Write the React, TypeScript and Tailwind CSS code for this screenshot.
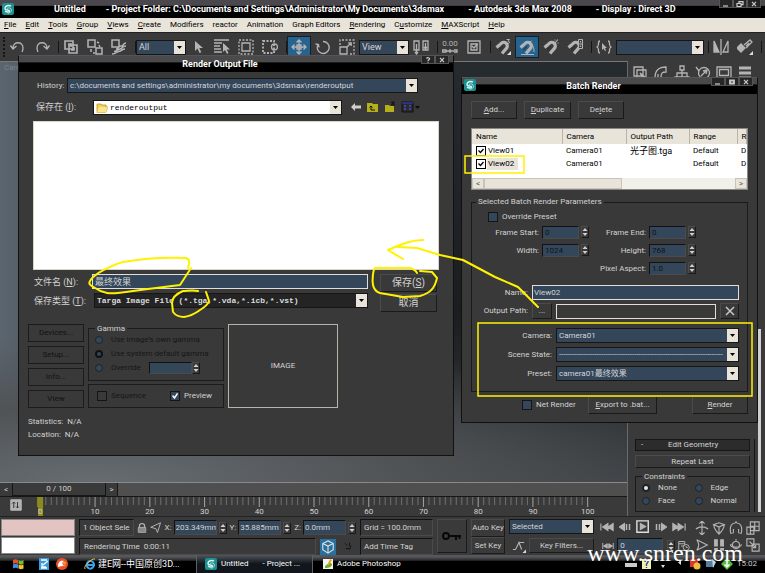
import React, { useState } from 'react';

const ui = "font-['Roboto','Noto_Sans_CJK_SC',sans-serif]";
const raised = 'border border-t-[#4b4b4b] border-l-[#4b4b4b] border-b-[#1a1a1a] border-r-[#1a1a1a]';
const sunken = 'border border-t-[#121212] border-l-[#121212] border-b-[#4b4b4b] border-r-[#4b4b4b]';

type IcoProps = { children: React.ReactNode; className?: string };

const Ico = ({ children, className = 'w-4 h-4' }: IcoProps) => (
  <svg className={`shrink-0 ${className}`} viewBox="0 0 16 16" fill="none" stroke="#b4b4b4" strokeWidth="1.3">
    {children}
  </svg>
);

const Logo = ({ className = 'w-3 h-3' }: { className?: string }) => (
  <svg className={`shrink-0 ${className}`} viewBox="0 0 12 12">
    <rect width="12" height="12" rx="2" fill="#1d8f8f" />
    <path d="M9 3.2C6.5 1.6 3 3 3 5.4c0 2.200 4.600 1 4.600 2.600C7.600 9.300 5 9.400 3 8.200" fill="none" stroke="#d8f5f2" strokeWidth="1.500" />
    <path d="M5 5.400c1.500-1.200 4.500-.4 4.500 1.800 0 1.800-1.800 3-3.800 3" fill="none" stroke="#9fe0da" strokeWidth="1" />
  </svg>
);

const Spinner = ({ className = 'h-3' }: { className?: string }) => (
  <span className={`w-2 shrink-0 flex items-center justify-center ${raised} ${className}`}>
    <svg className="w-1.5 h-2.5" viewBox="0 0 6 10" fill="#d0d0d0">
      <path d="M3 1l2.500 3h-5zM3 9l2.500-3h-5z" />
    </svg>
  </span>
);

type SelectProps = {
  label: string;
  value: string;
  className?: string;
  tone?: string;
  icon?: React.ReactNode;
};

const Select = ({ label, value, className = '', tone = 'bg-[#34475a] text-[#d4d4d4]', icon }: SelectProps) => (
  <span className={`relative flex h-[15px] min-w-0 border border-[#161616] ${tone} ${className}`}>
    {icon}
    <select aria-label={label} className="flex-1 min-w-0 appearance-none bg-transparent pl-0.5 pr-3 outline-none leading-[13px]">
      <option>{value}</option>
    </select>
    <span className="pointer-events-none absolute right-0 inset-y-0 w-[11px] bg-[#e8e4da] flex items-center justify-center">
      <svg className="w-[5px] h-[3px]" viewBox="0 0 5 3"><path d="M0 0h5L2.500 3z" fill="#000" /></svg>
    </span>
  </span>
);

type CheckProps = { label: string; checked?: boolean; disabled?: boolean };

const Check = ({ label, checked = false, disabled = false }: CheckProps) => {
  const [on, setOn] = useState(checked);
  return (
    <label className={`relative flex items-center gap-1 whitespace-nowrap ${disabled ? 'text-[#161616]' : ''}`}>
      <input
        type="checkbox"
        checked={on}
        disabled={disabled}
        onChange={() => setOn(!on)}
        className="peer appearance-none w-2.5 h-2.5 border border-[#151515] bg-[#34475a] disabled:bg-[#3a3a3a]"
      />
      <svg className="hidden peer-checked:block absolute left-0.5 w-1.5 h-2" viewBox="0 0 6 8"><path d="M.5 3.500l2 2.500L5.500 1.500" fill="none" stroke="#fff" strokeWidth="1.500" /></svg>
      {label}
    </label>
  );
};

type RadioProps = { name: string; label: string; checked?: boolean; disabled?: boolean };

const Radio = ({ name, label, checked, disabled }: RadioProps) => (
  <label className={`flex items-center gap-2 whitespace-nowrap ${disabled ? 'text-[#161616]' : ''}`}>
    <input
      type="radio"
      name={name}
      defaultChecked={checked}
      disabled={disabled}
      className="appearance-none w-2 h-2 shrink-0 rounded-full border border-[#1c232b] bg-[#34475a] checked:bg-[#e8e8e8] checked:border-2 disabled:checked:bg-[#34475a] disabled:checked:border-[#111]"
    />
    {label}
  </label>
);

const Button = ({ children, className = '' }: IcoProps) => (
  <button className={`flex items-center justify-center h-[18px] ${raised} ${className}`}>{children}</button>
);

const WinButtons = ({ marks }: { marks: string[] }) => (
  <div className="absolute right-1 top-0 flex">
    {marks.map((m) => (
      <button key={m} aria-label={m} className="w-3.5 h-2 flex items-center justify-center border border-t-0 border-[#555] bg-[#262626]">
        <svg className="w-2 h-1.5" viewBox="0 0 8 6" fill="none" stroke="#ccc" strokeWidth="1.200">
          {m === 'Minimize' && <path d="M1 5h5" />}
          {m === 'Restore' && <path d="M1 2.500h4v3h-4zM3 2V.6h4v3H5.500" />}
          {m === 'Maximize' && <path d="M2 1.500h4v3H2z" strokeWidth="1.800" />}
          {m === 'Help' && <path d="M2.500 1.500C3 .3 6 .5 5.500 2 5.300 2.800 4 2.600 4 4M4 4.800v1" />}
          {m === 'Close' && <path d="M2 .8l4 4.400M6 .8L2 5.200" />}
        </svg>
      </button>
    ))}
  </div>
);

const titleFont = 'font-bold text-[9px] text-white';

const TitleBar = () => (
  <header className={`relative h-[18px] shrink-0 flex items-center px-0.5 bg-linear-to-b from-[#4a484c] from-30% to-black to-35% whitespace-pre ${titleFont}`}>
    <Logo />
    <span className="ml-10">Untitled</span>
    <span className="ml-5">- Project Folder: C:\Documents and Settings\Administrator\My Documents\3dsmax</span>
    <span className="ml-6">- Autodesk 3ds Max 2008</span>
    <span className="ml-6">- Display : Direct 3D</span>
    <WinButtons marks={['Minimize', 'Restore', 'Close']} />
  </header>
);

const menus = [
  ['', 'F', 'ile'], ['', 'E', 'dit'], ['', 'T', 'ools'], ['', 'G', 'roup'], ['', 'V', 'iews'], ['', 'C', 'reate'],
  ['Modifiers', '', ''], ['reactor', '', ''], ['Animation', '', ''], ['Graph Editors', '', ''],
  ['', 'R', 'endering'], ['C', 'u', 'stomize'], ['', 'M', 'AXScript'], ['', 'H', 'elp'],
];

const MenuBar = () => (
  <nav className="h-[14px] shrink-0 flex items-center gap-[9px] pl-1 bg-[#e8e4da] text-black">
    {menus.map(([a, u, b]) => (
      <a key={a + u + b} href="#menu">{a}<u>{u}</u>{b}</a>
    ))}
  </nav>
);

const Sep = () => <span className="w-[5px] h-3 shrink-0 border-r border-[#161616]" />;

const Tool = ({ name, on, children }: { name: string; on?: boolean; children: React.ReactNode }) => (
  <button aria-label={name} className={`w-6 h-[22px] shrink-0 flex items-center justify-center ${on ? 'bg-[#27638f] border border-[#12202c]' : ''}`}>
    <Ico>{children}</Ico>
  </button>
);

const magnet = (
  <>
    <path d="M1.500 8.500L6 4.600a3.600 3.600 0 0 1 5.400 4.800L7 14.500" strokeWidth="3.200" />
    <path d="M4.200 11.200L8 7.400" stroke="#2a2a2a" strokeWidth="1" />
  </>
);

const Toolbar = () => (
  <div className="h-[29px] shrink-0 flex items-center pl-[3px] bg-[#3a3a3a] border-t border-[#222] text-[9px]">
    <span className="w-[3px] h-5 border-l-2 border-dotted border-[#151515]" />
    <Tool name="Undo"><path d="M3 9c0-7 10-7 10 0 0 2-.5 3-1 4M.5 6.500L3 10l3.500-3" /></Tool>
    <Tool name="Redo"><path d="M13 9c0-7-10-7-10 0 0 2 .5 3 1 4M15.500 6.500L13 10l-3.500-3" /></Tool>
    <Sep />
    <Tool name="Link"><path d="M2 2h8v8H2zM6 6h8v8H6zM5 5h3v3M11 8v3H8" strokeWidth="1.600" /></Tool>
    <Tool name="Unlink"><path d="M1 1h7v7H1zM9 9h6v6H9zM10 3l2 1M12 6l1 2M4 10v3M6 14l2 0" strokeWidth="1.500" /></Tool>
    <Tool name="Bind to space warp"><path d="M1 1h7v7H1zM5 10c3 0 2-3 5-3s2-3 5-3M3 12.500c3 0 3-2 6-2.500s2-3 6-3M1 15c4 0 4-2 7-2.500s3-2.500 6-2.500" strokeWidth="1.500" /></Tool>
    <Sep />
    <Select label="Selection filter" value="All" className="w-[50px]" />
    <Tool name="Select"><path d="M5 2v10l2.500-2.500L9.500 14l1.800-.8-2-4.200H13z" fill="#b4b4b4" stroke="none" /></Tool>
    <Tool name="Select by name"><path d="M0 1h15M0 4h8M0 7h6M0 10h7M0 13h8" /><path d="M9 4v9l2-2 2 4 1.500-1-1.800-3.500H16z" fill="#b4b4b4" stroke="none" /></Tool>
    <Tool name="Rectangular region"><path d="M4 4h8v8H4z" /><path d="M1 1h14v14H1z" strokeDasharray="2 1.500" /></Tool>
    <Tool name="Window crossing"><path d="M1 2h11v12H1z" strokeDasharray="2 1.500" strokeWidth="1.800" /><circle cx="12.500" cy="8" r="3" /></Tool>
    <Sep />
    <Tool name="Move" on><path d="M8 1v14M1 8h14M5.500 3.500L8 1l2.500 2.500M5.500 12.500L8 15l2.500-2.500M3.500 5.500L1 8l2.500 2.500M12.500 5.500L15 8l-2.500 2.500M6 6h4v4H6z" /></Tool>
    <Tool name="Rotate"><path d="M3 5.500a6 6 0 1 0 5-3M.5 5l3 .5.5 3" /></Tool>
    <Tool name="Scale"><path d="M1 8h7v7H1z" /><path d="M1 6V1h14v14h-5" strokeDasharray="2 1.500" /><path d="M8 8l4-4M9 3.800h3.200V7" /></Tool>
    <Select label="Coordinate system" value="View" className="w-[50px]" />
    <Tool name="Pivot center"><path d="M1 2h5v9H1zM10 2h5v9h-5zM3.500 5v10M2 13l1.500 2L5 13M12.500 4v6M11 8l1.500 2L14 8" /></Tool>
    <Sep />
    <button aria-label="Manipulate" className="w-6 flex flex-col items-center text-[8px] leading-[8px] text-[#b4b4b4]">
      0.00
      <svg className="w-4 h-1.5" viewBox="0 0 16 6" fill="none" stroke="#b4b4b4" strokeWidth="1.300"><path d="M0 2h4v2H0zM4 3h8M12 2h3v2h-3M8 1v4" /></svg>
    </button>
    <Tool name="Keyboard override"><path d="M2 2h12v12H2zM5 5h6v6H5zM6 7l2 2 4-4.500" /></Tool>
    <Sep />
    <Tool name="Snaps">{magnet}<path d="M11.500.5h3l-1.500 1.800c2.500 0 2 2.700-1 2" strokeWidth="1" /><path d="M16 12v4h-4z" fill="#ddd" stroke="none" /></Tool>
    <Tool name="Angle snap" on>{magnet}<path d="M2 15.500h13M10.500 3.500c3 1 4.500 5 4.500 9.500M12.500 2L10 3.500l2 2.500" strokeWidth="1" /></Tool>
    <Tool name="Percent snap">{magnet}<path d="M11.500 4.500l3.500-4M11.500 1h1M14.500 4h1" strokeWidth="1.100" /></Tool>
    <Tool name="Spinner snap">{magnet}<path d="M11.500.5h4v9h-4zM11.500 5h4" strokeWidth="1" fill="#3a3a3a" /><path d="M13.500 2v1.500M13.500 6.500V8" /></Tool>
    <Sep />
    <Tool name="Named selections"><path d="M4 2C1 2 4 7 1 8c3 1 0 6 3 6M12 2c3 0 0 5 3 6-3 1 0 6-3 6" /><path d="M6 4v7l1.500-1.500L9 12l1-.6L9 9h2z" fill="#b4b4b4" stroke="none" /></Tool>
    <Select label="Named selection sets" value="" className="w-[88px]" />
    <Sep />
    <Tool name="Mirror"><path d="M1 2v11h5zM8 0v16" fill="#b4b4b4" /><path d="M15 2v11h-5z" /></Tool>
    <Tool name="Align"><path d="M0 9l4-4 4 4-4 4z" fill="#b4b4b4" /><path d="M7 6l6-5 2 2-6 6M9 7l3-3" /><path d="M16 12v4h-4z" fill="#ddd" stroke="none" /></Tool>
    <Sep />
  </div>
);

const TimeTrack = () => (
  <div className="shrink-0 bg-[#3a3a3a]">
    <div className="h-[14px] flex items-stretch border-t border-[#8a8a8a] bg-[#4f4f4f]">
      <button className="w-3 flex items-center justify-center bg-[#3a3a3a]">&lt;</button>
      <span className="w-[94px] flex items-center justify-center bg-[#3a3a3a] border-x border-[#161616] border-b">0 / 100</span>
      <button className="w-3 flex items-center justify-center bg-[#3a3a3a] border-r border-[#161616]">&gt;</button>
    </div>
    <div className="h-5 flex border-t border-[#161616]">
      <span className="w-[13px] shrink-0 relative">
        <Ico className="absolute left-2.5 top-0.5 w-3 h-3"><path d="M1 1h14v14H1z" fill="#b4b4b4" /><path d="M5 12V4M3 6l2-2 2 2M10 4v8M8 10l2 2 2-2" stroke="#333" /></Ico>
      </span>
      <div className="relative flex-1 mr-3">
        <svg className="absolute inset-x-0 top-0 w-full h-2.5" viewBox="0 0 1100 10" preserveAspectRatio="none">
          {Array.from({ length: 101 }, (_, i) => (
            <rect key={i} x={49 + i * 10} y="0" width="2" height={i % 10 === 0 ? 10 : 8} fill={i % 10 === 0 ? '#9a9a9a' : '#6c6c6c'} />
          ))}
          <rect x="44" y="0" width="11" height="10" fill="#8d8a1c" />
        </svg>
        <div className="relative flex pt-2.5 leading-[9px]">
          {[0, 10, 20, 30, 40, 50, 60, 70, 80, 90, 100].map((n) => (
            <span key={n} className="flex-1 text-center"><span className={n === 0 ? 'bg-[#8d8a1c]' : ''}>{n}</span></span>
          ))}
        </div>
      </div>
    </div>
  </div>
);

const CommandPanel = () => (
  <aside className="w-[138px] shrink-0 flex flex-col bg-[#3a3a3a] border-l border-[#6a6a6a]">
    <div className="flex gap-[5px] pl-1 pt-1 h-5">
      <Ico><path d="M2 2h9v9H2zM5 5h9v9H5z" /><path d="M8 8l5 4-2 1z" fill="#b4b4b4" /></Ico>
      <Ico><path d="M2 13C2 5 6 2 13 2v5C9 7 8 8 8 13zM5 13V9" /></Ico>
      <Ico><path d="M6 1h4v4H6zM8 5v8M3 12V8h10v4M1 12h4v3H1zM6 12h4v3H6zM11 12h4v3h-4z" /></Ico>
      <Ico><circle cx="9" cy="8" r="5.500" /><path d="M1 2l3 4M6 11l6-6M8 6l4-1-1 4" /></Ico>
      <Ico><path d="M1 2h14v11H1zM3.500 4.500h9v6h-9z" /></Ico>
      <Ico><path d="M2 3h12M2 8h12M2 13h12" strokeWidth="3" /></Ico>
    </div>
    <div className="mt-auto flex gap-[2px] pl-[5px] pr-[3px] pb-1">
      <div className="flex-1 pl-0.5 pr-1 border-r border-[#161616]">
        <div className="h-3 mb-1 flex items-center bg-[#2c2c2c] border border-[#161616]">
          <span className="w-3 text-center">-</span>
          <span className="flex-1 pr-3 pl-5">Edit Geometry</span>
        </div>
        <button className={`w-full h-[13px] mb-1 flex items-center justify-center ${raised}`}>Repeat Last</button>
        <fieldset className="border border-[#1a1a1a] px-1.5 pb-1">
          <legend className="leading-[9px] px-0.5">Constraints</legend>
          <div className="grid grid-cols-2 gap-x-1 leading-[13px]">
            <Radio name="cons" label="None" checked />
            <Radio name="cons" label="Edge" />
            <Radio name="cons" label="Face" />
            <Radio name="cons" label="Normal" />
          </div>
        </fieldset>
      </div>
      <span className="w-[3px] mx-px -mt-[110px] bg-[#cfcfcf]" />
    </div>
  </aside>
);

const Coord = ({ axis, value }: { axis: string; value: string }) => (
  <label className="flex items-center gap-0.5">
    {axis}:
    <input defaultValue={value} className={`w-[43px] h-[15px] pl-px bg-[#34475a] ${sunken}`} />
    <Spinner />
  </label>
);

const StatusBar = () => (
  <div className="h-[39px] shrink-0 flex gap-1 pt-0.5 pl-px pr-1 bg-[#3a3a3a] border-t border-[#222] whitespace-nowrap">
    <div className="w-[74px] flex flex-col gap-px">
      <span className="h-[17px] bg-[#e3c4c2] border border-[#888]" />
      <span className="h-[17px] bg-white border border-[#888]" />
    </div>
    <div className="w-[277px] flex flex-col gap-0.5">
      <div className="h-[17px] flex items-center justify-between">
        <span className={`h-[17px] leading-[16px] px-[3px] ${sunken}`}>1 Object Sele</span>
        <Ico className="w-2.5 h-2.5"><path d="M2 7h12v8H2z" fill="#888" /><path d="M4 7V4c0-4 8-4 8 0v3" strokeWidth="2" /></Ico>
        <Ico className="w-3 h-3"><path d="M14 1L1 7l7 2 2 5z" /></Ico>
        <Coord axis="X" value="203.349mm" />
        <Coord axis="Y" value="35.885mm" />
        <Coord axis="Z" value="0.0mm" />
      </div>
      <div className="h-[17px] flex items-center gap-1">
        <span className={`flex-1 h-[17px] leading-[16px] pl-1 ${sunken}`}>Rendering Time&nbsp; 0:00:11</span>
        <button aria-label="Adaptive" className="w-4 h-4 flex items-center justify-center bg-[#27709f]"><Ico className="w-3.5 h-3.5"><path d="M8 1l6 3v7l-6 4-6-4V4zM2 4l6 3 6-3M8 7v8" stroke="#ddd" /></Ico></button>
        <Ico className="w-4 h-3"><path d="M4 3l3 3M10 2v5M5 10h5M12 6l-2 6" stroke="#151515" /></Ico>
      </div>
    </div>
    <div className="w-[73px] flex flex-col gap-0.5">
      <span className={`h-[17px] leading-[16px] pl-[3px] ${sunken}`}>Grid = 100.0mm</span>
      <button className={`h-[17px] leading-[15px] pl-[3px] text-left ${sunken}`}>Add Time Tag</button>
    </div>
    <button aria-label="Set keys" className={`w-[30px] h-[34px] flex items-center justify-center ${raised}`}>
      <svg className="w-5 h-2.5" viewBox="0 0 20 10" fill="none" stroke="#080808" strokeWidth="2"><circle cx="4" cy="5" r="3" /><path d="M7 5h12M14 5v4M17.500 5v3" /></svg>
    </button>
    <div className="w-[34px] flex flex-col">
      <button className={`h-[18px] ${raised}`}>Auto Key</button>
      <button className={`h-[17px] ${raised}`}>Set Key</button>
    </div>
    <div className="w-[85px] flex flex-col gap-1">
      <Select label="Key mode" value="Selected" />
      <div className="flex items-center">
        <Ico className="w-5 h-3.5"><path d="M1 12h3l4-8 3 8M8 4h6" /><path d="M16 12v4h-4z" fill="#ddd" stroke="none" /></Ico>
        <button className={`flex-1 h-[15px] flex items-center justify-center ${raised}`}>Key Filters...</button>
      </div>
    </div>
    <div className="w-[92px] flex flex-col gap-1">
      <div className="h-[15px] flex items-center justify-between pl-0.5 pr-1">
        <Ico className="w-3.5 h-3.5"><path d="M1 4v8M9 4v8L3 8zM15 4v8L9 8z" fill="#b4b4b4" /></Ico>
        <Ico className="w-3 h-3"><path d="M7 4v8L1 8zM10 4v8M14 4v8" fill="#b4b4b4" strokeWidth="2" /></Ico>
        <Ico className="w-3.5 h-3.5"><path d="M1 1h13v13H1z" stroke="#e0e0e0" strokeWidth="1.600" /><path d="M5 4v7l6-3.500z" fill="#b4b4b4" /></Ico>
        <Ico className="w-3 h-3"><path d="M9 4v8l6-4zM6 4v8M2 4v8" fill="#b4b4b4" strokeWidth="2" /></Ico>
        <Ico className="w-3.5 h-3.5"><path d="M15 4v8M7 4v8l6-4zM1 4v8l6-4z" fill="#b4b4b4" /></Ico>
      </div>
      <div className="h-[15px] flex items-center justify-between pl-1">
        <Ico className="w-3 h-3"><path d="M1 4v8M15 4v8M7 5v6L2 8zM9 5v6l5-3z" fill="#b4b4b4" /></Ico>
        <input aria-label="Current frame" defaultValue="0" className={`w-[46px] h-[15px] pl-0.5 bg-[#34475a] ${sunken}`} />
        <Spinner />
        <Ico className="w-3 h-3"><path d="M1 2h8v12H1zM1 5h8M4 8h4" /><circle cx="11" cy="10" r="4" fill="#3a3a3a" /><path d="M11 8v2h2" /></Ico>
      </div>
    </div>
    <div className="flex-1 grid grid-cols-4 justify-items-center items-center pb-0.5">
      <Ico className="w-3.5 h-3.5"><path d="M8 0v16M5 3l3-3 3 3M5 13l3 3 3-3M1 9l4-2h6l4 2" /></Ico>
      <Ico className="w-3.5 h-3.5"><path d="M2 4l6-2 6 2-6 3zM2 4c0 5 3 8 6 11 3-3 6-6 6-11M8 7v8" /></Ico>
      <Ico className="w-3.5 h-3.5"><path d="M4 14H2c-2-9 2-12 6-12s8 3 6 12h-2M8 2V0M5 9v5M11 9v5" /></Ico>
      <Ico className="w-3.5 h-3.5"><path d="M5 1h10v10H5zM1 7h8v8H1zM10 1v10M5 6h10M5 7v8" /></Ico>
      <Ico className="w-3.5 h-3.5"><path d="M2 2l12 6-12 6M2 2c3 4 3 8 0 12" /></Ico>
      <Ico className="w-3.5 h-3.5"><path d="M3 2h3v7H3zM10 2h3v7h-3zM3 12h3v2H3zM10 12h3v2h-3z" fill="#b4b4b4" /></Ico>
      <Ico className="w-3.5 h-3.5"><circle cx="8" cy="8" r="4" /><path d="M3 7c-6 3 12 6 11 0M8 1v2M8 13v2" /></Ico>
      <Ico className="w-3.5 h-3.5"><path d="M1 1h8v8H1zM7 7h8v8H7zM4 4l7 7M11 8v3H8" /></Ico>
    </div>
  </div>
);

const Taskbar = () => (
  <footer className="h-[18px] shrink-0 flex items-center bg-linear-to-b from-[#55575a] from-10% via-[#2a2a2c] via-30% to-black to-36% text-white">
    <button aria-label="Start" className="w-9 flex justify-center">
      <svg className="w-3 h-3" viewBox="0 0 12 12"><path d="M1 2c2-1 3-1 5 0v4C4 5 3 5 1 6z" fill="#e2532b" /><path d="M6.500 2c2 1 3 1 5 0v4c-2 1-3 1-5 0z" fill="#7db93a" /><path d="M1 6.500c2-1 3-1 5 0v4c-2-1-3-1-5 0z" fill="#3d8fe0" /><path d="M6.500 6.500c2 1 3 1 5 0v4c-2 1-3 1-5 0z" fill="#f5c531" /></svg>
    </button>
    <svg className="w-3.5 h-3 mx-px" viewBox="0 0 14 12"><path d="M2 0h10v12H2z" fill="#3a9be0" /><path d="M4 2h6M4 10h6M6 7l5-4M5 5v4h4" stroke="#fff" strokeWidth="1.300" fill="none" /></svg>
    <svg className="w-3 h-3 ml-1" viewBox="0 0 12 12"><circle cx="6" cy="6" r="6" fill="#e9502a" /><path d="M2 9c0-6 3-7 6-6-2 1-2 3-1 4l3 0" fill="#fff" /><circle cx="8.500" cy="5" r="1.500" fill="#f7a21b" /></svg>
    <button className="w-[112px] ml-4 flex items-center gap-0.5 whitespace-nowrap text-[9px]">
      <svg className="w-3 h-3 shrink-0" viewBox="0 0 12 12" fill="none"><path d="M10 8c-3 5-8 2-7-2s7-4 7 1H3.500" stroke="#3fa1ea" strokeWidth="2" /><path d="M1 11C-1 8 8 0 11 1" stroke="#f3c32f" /></svg>
      建E网--中国原创3D...
    </button>
    <button className="w-[117px] h-[18px] flex items-center gap-1 pl-2 border-x border-[#5a6068] bg-linear-to-b from-[#50565c] to-[#10161c] to-50% whitespace-pre">
      <Logo />Untitled<span className="ml-2.5">- Project ...</span>
    </button>
    <button className="flex items-center gap-1 pl-2.5 whitespace-nowrap">
      <svg className="w-2.5 h-2.5" viewBox="0 0 10 10"><path d="M0 0h10v10H0z" fill="#f4f4f4" /><path d="M2 9c0-4 3-3 4-6l3 2C9 8 6 9 2 9z" fill="#6aa52c" /><path d="M7 0l2 1-3 5-2 1z" fill="#e9a61c" /></svg>
      Adobe Photoshop
    </button>
    <div className="ml-auto flex items-center gap-1 pr-2">
      <svg className="w-3 h-2" viewBox="0 0 12 8"><path d="M0 3h12v4H0z" fill="#ccc" /></svg>
      <svg className="w-3 h-3" viewBox="0 0 12 12"><path d="M1 1h9v10H1z" fill="#f4efb0" /><path d="M4 4c0-3 4-2 3 0L5.500 6v2M5.500 9v1" stroke="#224a9a" strokeWidth="1.400" fill="none" /></svg>
      <svg className="w-3 h-2.5" viewBox="0 0 12 10"><path d="M4 6h4L6 9z" fill="#ddd" /></svg>
      <svg className="w-3 h-2.5" viewBox="0 0 12 10"><path d="M8 1v5L5 3.500z" fill="#ddd" /></svg>
      <svg className="w-3 h-3" viewBox="0 0 12 12"><path d="M1 1h8v8H1z" fill="#d8382c" /><circle cx="8" cy="8" r="3.500" fill="#f0bd3a" /></svg>
      <svg className="w-3 h-3" viewBox="0 0 12 12"><path d="M1 2h8v7H1z" fill="#5580a0" /><path d="M7 1l4 3-3 6" fill="#c8d4dc" /></svg>
      <svg className="w-3 h-3" viewBox="0 0 12 12"><path d="M6 0l6 6-6 6-6-6z" fill="#4fbf35" /><path d="M6 3v6M3.500 6.500L6 9l2.500-2.500" stroke="#fff" strokeWidth="1.500" fill="none" /></svg>
      <span className="text-[#cfcfcf]">15:02</span>
    </div>
  </footer>
);

const DialogTitle = ({ children, marks, logo }: { children: string; marks: string[]; logo?: boolean }) => (
  <div className={`relative h-4 pr-8 flex items-center justify-center bg-linear-to-b from-[#4a4a4c] from-38% to-black to-44% ${titleFont}`}>
    {logo && <Logo className="w-3 h-3 absolute left-0.5 top-px" />}
    {children}
    <WinButtons marks={marks} />
  </div>
);

const OutputDialog = () => (
  <section className="absolute left-[18px] top-[55px] w-[436px] bg-[#393939] border border-t-[#555] border-[#111] pb-3.5">
    <DialogTitle marks={['Help', 'Close']}>Render Output File</DialogTitle>
    <div className="flex items-center pl-[18px] mt-1.5 h-[15px]">
      <span className="w-[30px]">History:</span>
      <Select label="History" value="c:\documents and settings\administrator\my documents\3dsmax\renderoutput" className="w-[351px]" />
    </div>
    <div className="flex items-center pl-[17px] mt-1.5 h-4 text-[9px]">
      <span className="w-[57px]">保存在 (<u>I</u>):</span>
      <Select
        label="保存在"
        value="renderoutput"
        className="w-[249px] font-['Liberation_Mono',monospace] text-[8px]"
        tone="bg-white text-black"
        icon={<svg className="w-3 h-3 ml-0.5 mt-px shrink-0" viewBox="0 0 12 12"><path d="M1 3V2h4l1 1h4v2h2L9.500 10.500H1z" fill="#f3cf4e" stroke="#b5871c" strokeWidth=".7" /><path d="M3 5h9L9.500 10.500H1z" fill="#fbe68c" /></svg>}
      />
      <div className="flex items-center gap-[5px] ml-2">
        <svg className="w-3 h-3" viewBox="0 0 12 12"><path d="M1 6l4-4v2.500h6v3H5V10z" fill="#d2cfc8" /></svg>
        <svg className="w-3 h-3" viewBox="0 0 12 12"><path d="M0 2h5l1 1h5v8H0z" fill="#b5b017" /><path d="M4 9V5M2.500 6.500L4 5l1.500 1.500M4 9h4" stroke="#111" fill="none" /></svg>
        <svg className="w-3 h-3" viewBox="0 0 12 12"><path d="M1 4h4l1 1h4v6H1z" fill="#b5b017" /><path d="M9 0v5M7 1l4 3M11 1L7 4" stroke="#111" /></svg>
        <svg className="w-5 h-3" viewBox="0 0 20 12"><path d="M1 1h11v10H1z" fill="#2b2b2b" stroke="#111" /><path d="M1 2h11" stroke="#3333a8" strokeWidth="1.500" /><path d="M3 5h2M8 5h2M3 8h2M8 8h2" stroke="#4a4ad8" strokeWidth="1.500" /><path d="M14 5h5l-2.500 3z" fill="#0a0a0a" /></svg>
      </div>
    </div>
    <div className="mx-3.5 mt-1.5 h-[149px] bg-white border border-[#d8d4c8]" />
    <div className="flex mt-1 pl-[15px] pr-4 text-[9px]">
      <div className="w-[334px] flex flex-col gap-1">
        <label className="flex items-center h-[15px]">
          <span className="w-[58px]">文件名 (<u>N</u>):</span>
          <input defaultValue="最终效果" className="flex-1 h-[15px] pl-0.5 bg-[#34475a] border border-[#e4dcd8] outline-none" />
        </label>
        <div className="flex items-center">
          <span className="w-[60px]">保存类型 (<u>T</u>):</span>
          <Select label="保存类型" value="Targa Image File (*.tga,*.vda,*.icb,*.vst)" className="flex-1 font-['Liberation_Mono',monospace] font-bold text-[8px]" tone="bg-[#242424] text-[#dcdcdc]" />
        </div>
      </div>
      <div className="flex-1 ml-3 flex flex-col gap-0.5 text-[10px]">
        <Button>保存(<u>S</u>)</Button>
        <Button>取消</Button>
      </div>
    </div>
    <div className="flex gap-1 mt-3 pl-[9px]">
      <div className="w-[56px] flex flex-col gap-1 text-[#121212]">
        {['Devices...', 'Setup...', 'Info...', 'View'].map((b) => (
          <button key={b} disabled className="h-[18px] border border-[#1c1c1c]">{b}</button>
        ))}
      </div>
      <div className="w-[136px] flex flex-col justify-between">
        <fieldset className="h-[57px] px-1.5 border border-[#1c1c1c]">
          <legend className="leading-[9px] px-0.5">Gamma</legend>
          <div className="flex flex-col leading-[14px]">
            <Radio name="gamma" label="Use image's own gamma" disabled />
            <Radio name="gamma" label="Use system default gamma" checked disabled />
            <div className="flex items-center gap-2">
              <Radio name="gamma" label="Override" disabled />
              <span className="flex">
                <input aria-label="Gamma override" disabled className={`w-[43px] h-3 bg-[#34475a] ${sunken}`} />
                <Spinner />
              </span>
            </div>
          </div>
        </fieldset>
        <div className="h-6 px-2 flex items-center gap-6 border border-[#1c1c1c]">
          <Check label="Sequence" disabled />
          <Check label="Preview" checked />
        </div>
      </div>
      <div className="w-[110px] flex items-center justify-center border border-[#b8b4ac]">IMAGE</div>
    </div>
    <div className="pl-[9px] mt-[7px] leading-[13px] whitespace-pre">
      <p>Statistics:  N/A</p>
      <p>Location:  N/A</p>
    </div>
  </section>
);

const rows = [
  { name: 'View01', camera: 'Camera01', path: '光子图.tga' },
  { name: 'View02', camera: 'Camera01', path: '' },
];

const Num = ({ label, value, className }: { label: string; value: string; className: string }) => (
  <label className={`flex items-center justify-end gap-[3px] ${className}`}>
    {label}:
    <span className="flex gap-0.5">
      <input defaultValue={value} disabled className={`w-[37px] h-[13px] pl-0.5 bg-[#34475a] text-[#0e1216] ${sunken}`} />
      <Spinner />
    </span>
  </label>
);

const BatchDialog = () => (
  <section className="absolute left-[461px] top-[77px] w-[297px] bg-[#393939] border border-t-[#555] border-[#111] pb-2">
    <DialogTitle marks={['Minimize', 'Maximize', 'Close']} logo>Batch Render</DialogTitle>
    <div className="px-[9px]">
      <div className="flex gap-[7px] mt-[7px]">
        <Button className="w-[46px]"><span><u>A</u>dd...</span></Button>
        <Button className="w-[47px]"><span><u>D</u>uplicate</span></Button>
        <Button className="w-[46px]"><span>De<u>l</u>ete</span></Button>
      </div>
      <div className="mt-[9px] h-[62px] bg-white text-black border border-[#888] overflow-hidden flex flex-col">
        <table className="w-full table-fixed text-left">
          <thead className="bg-[#e8e4da]">
            <tr className="h-[15px]">
              {[['Name', 'w-[90px]'], ['Camera', 'w-[64px]'], ['Output Path', 'w-[63px]'], ['Range', 'w-[48px]'], ['R', '']].map(([h, w]) => (
                <th key={h} className={`font-normal pl-1 py-0 border-r border-[#b8b4a8] ${w}`}>{h}</th>
              ))}
            </tr>
          </thead>
          <tbody>
            {rows.map((r) => (
              <tr key={r.name} className="h-[13px] leading-[12px]">
                <td className="pl-1 py-0">
                  <label className="relative flex items-center gap-px">
                    <input type="checkbox" defaultChecked className="peer appearance-none w-2.5 h-2.5 border border-black bg-white" />
                    <svg className="hidden peer-checked:block absolute left-0.5 w-1.5 h-1.5" viewBox="0 0 6 6"><path d="M.5 2.500l2 2L5.500 1" fill="none" stroke="#000" strokeWidth="1.300" /></svg>
                    <span className={r.name === 'View02' ? 'bg-[#e8e4da] px-px pr-1' : 'px-px'}>{r.name}</span>
                  </label>
                </td>
                <td className="pl-1 py-0">{r.camera}</td>
                <td className="pl-1 py-0 text-[9px]">{r.path}</td>
                <td className="pl-1 py-0">Default</td>
                <td className="pl-1 py-0">D</td>
              </tr>
            ))}
          </tbody>
        </table>
        <div className="mt-auto h-[11px] shrink-0 flex bg-[#f2f0ea] leading-[9px] text-[#555]">
          <button className="w-3 bg-[#e8e4da] border border-[#c8c4b8]">&lt;</button>
          <span className="w-[138px] bg-[#e8e4da] border border-[#c8c4b8]" />
          <button className="ml-auto w-3 bg-[#e8e4da] border border-[#c8c4b8]">&gt;</button>
        </div>
      </div>
      <fieldset className="min-w-0 mt-[7px] border border-[#1a1a1a] pb-2.5 pr-2">
        <legend className="ml-1 px-0.5 leading-[10px]">Selected Batch Render Parameters</legend>
        <div className="pl-4 pt-1 h-[15px]"><Check label="Override Preset" /></div>
        <div className="flex flex-col gap-[5px] pt-1">
          <div className="flex"><Num label="Frame Start" value="0" className="w-[117px]" /><Num label="Frame End" value="0" className="w-[107px]" /></div>
          <div className="flex"><Num label="Width" value="1024" className="w-[117px]" /><Num label="Height" value="768" className="w-[107px]" /></div>
          <Num label="Pixel Aspect" value="1.0" className="w-[224px]" />
        </div>
        <label className="flex items-center gap-1 mt-2.5">
          <span className="w-[56px] text-right">Name:</span>
          <input defaultValue="View02" className="flex-1 h-[15px] pl-px bg-[#34475a] border border-[#e4dcd8] outline-none" />
        </label>
        <div className="flex items-center gap-1 mt-[3px]">
          <label htmlFor="outpath" className="w-[56px] text-right whitespace-nowrap">Output Path:</label>
          <button className={`w-5 h-4 ${raised}`}>...</button>
          <input id="outpath" className="flex-1 min-w-0 h-[15px] border border-[#e4dcd8] outline-none" />
          <button aria-label="Clear output path" className={`w-[19px] h-4 flex items-center justify-center ${raised}`}>
            <svg className="w-2.5 h-2.5" viewBox="0 0 10 10"><path d="M1 1l8 8M9 1L1 9" stroke="#c8c8c8" strokeWidth="1.500" /></svg>
          </button>
        </div>
        <div className="flex flex-col gap-1 mt-[9px]">
          {[['Camera', 'Camera01'], ['Scene State', '-'.repeat(74)], ['Preset', 'camera01最终效果']].map(([k, v]) => (
            <div key={k} className="flex items-center gap-1">
              <span className="w-20 text-right">{k}:</span>
              <Select label={k} value={v} className="flex-1" />
            </div>
          ))}
        </div>
      </fieldset>
      <div className="flex items-center mt-1 pl-[51px]">
        <Check label="Net Render" />
        <Button className="w-[69px] ml-auto"><span><u>E</u>xport to .bat...</span></Button>
        <Button className="w-[56px] ml-[35px]"><span><u>R</u>ender</span></Button>
      </div>
    </div>
  </section>
);

// hand-drawn marker strokes over the windows
const Markers = () => (
  <svg className="absolute left-0 top-0 w-[765px] h-[573px] pointer-events-none" viewBox="0 0 765 573" fill="none" stroke="#fff200" strokeWidth="2" strokeLinecap="round" strokeLinejoin="round">
    <path d="M191 268L180 285 148 289 133 291C120 293 112 294 107 293 101 292 98 290 95 288 91 286 88 284 90 281 92 277 96 275 100 272 108 268 115 264 123 262 140 259 165 257 186 258 191 260 189 264 188 268" />
    <path d="M198 291C192 290 187 291 183 291 176 294 172 298 172 303L173 312C176 316 180 317 184 317 191 316 196 313 200 310 205 307 208 304 209 301 208 297 207 295 206 292" />
    <path d="M417 273C416 270 413 269 410 268L375 268C373 270 372 280 373 285 374 290 377 292 380 293L403 297 420 296C427 294 431 291 433 288 436 284 436 281 437 278L432 272 420 271" />
    <path d="M423 240C410 240 400 245 388 250L403 259M398 247L417 248 440 255 463 260 495 277 518 287 538 307" />
    <path d="M465 156h59v17h-59zM478 323h274v73H478z" strokeWidth="1.500" strokeLinejoin="miter" />
  </svg>
);

export default function App() {
  return (
    <div className={`relative h-screen min-h-[573px] flex flex-col overflow-hidden bg-[#3a3a3a] text-[#d2d2d2] text-[8px] leading-[12px] ${ui}`}>
      <TitleBar />
      <MenuBar />
      <Toolbar />
      <div className="flex-1 min-h-0 flex">
        <main className="flex-1 min-w-0 flex flex-col">
          <div className="flex-1 border-t border-[#777] text-[#7b838b] pl-1 bg-[radial-gradient(ellipse_100%_35%_at_15%_100%,#666c71_0%,#505356_50%,transparent_100%),linear-gradient(to_right,#5b656f_0%,#4a525b_12%,transparent_60%),linear-gradient(to_bottom,#262b30_0%,#1b1d20_60%,#3c4044_100%)]">
            Camera01
          </div>
          <TimeTrack />
        </main>
        <CommandPanel />
      </div>
      <StatusBar />
      <Taskbar />
      <OutputDialog />
      <BatchDialog />
      <Markers />
      <p className="absolute right-[22px] bottom-2 text-2xl leading-6 text-white font-['Liberation_Serif',serif] pointer-events-none">www.snren.com</p>
    </div>
  );
}
